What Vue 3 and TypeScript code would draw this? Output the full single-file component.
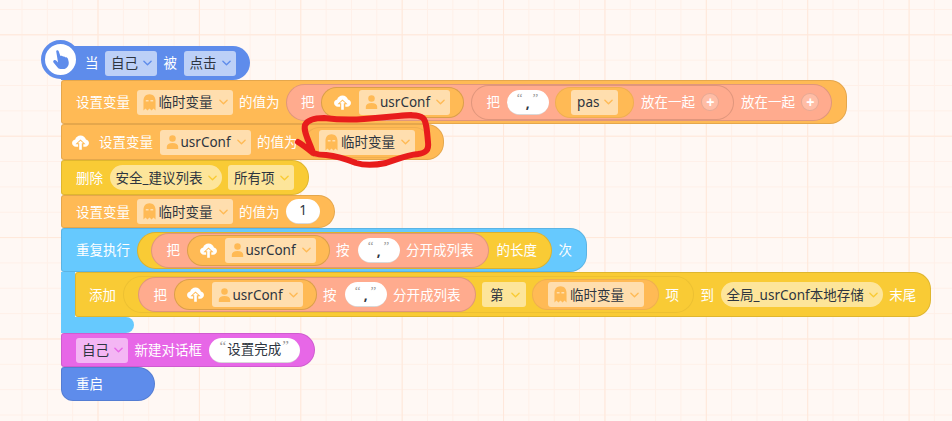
<template>
  <div class="page">
    <svg width="0" height="0" class="defs">
      <defs>
        <symbol id="ghost" viewBox="0 0 14 18">
          <path fill-rule="evenodd" d="M7 0C3 0 .5 3 .5 7v10.500l2.200-2 2.100 2 2.200-2 2.200 2 2.100-2 2.200 2V7C13.500 3 11 0 7 0ZM3 6.200h3v1.600H3Zm5 0h3v1.600H8Z" />
        </symbol>
        <symbol id="person" viewBox="0 0 14 16">
          <circle cx="7" cy="4" r="3.700" />
          <path d="M.5 16v-2.500C.5 10.500 3 9 7 9s6.500 1.500 6.500 4.500V16Z" />
        </symbol>
        <symbol id="cloud" viewBox="0 0 18 16">
          <path fill="#fff" d="M4.200 12.500C1.900 12.500 0 10.800 0 8.600c0-2 1.400-3.500 3.300-3.800C4 2.400 6.200.6 9 .6c2.900 0 5.200 1.900 5.800 4.300 1.900.3 3.200 1.800 3.200 3.700 0 2.200-1.800 3.900-4 3.900h-2V9.800h2.400L9 4.900 3.600 9.800H6.500v2.700Z" />
          <path fill="#fff" d="M7.600 15.800V8.900H6l3-2.800 3 2.800h-1.600v6.900Z" />
        </symbol>
        <symbol id="caret" viewBox="0 0 10 6">
          <path d="M1 1l4 4 4-4" fill="none" stroke="currentColor" stroke-width="1.500" stroke-linecap="round" stroke-linejoin="round" />
        </symbol>
      </defs>
    </svg>

    <div class="stack">
      <div class="row blue hat">
        <div class="hat-icon">
          <svg viewBox="0 0 16 19" width="16" height="19">
            <path fill="#5e8ceb" d="M3.200 1.200C3.400.2 5-.2 5.600 1L7.400 6C8.500 5.500 9.500 5.800 10 6.600 11 6.200 12 6.600 12.400 7.400 13.400 7.200 14.600 7.800 15 9L15.600 11.500C16.200 14.500 15 17 13 18.200L11.500 19H7.500C6 19 5 18 4.200 17L.5 12.500C-.1 11.600.2 10.600 1 10.200 1.800 9.800 2.800 10 3.400 10.800L5 12.400Z" />
          </svg>
        </div>
        <span>当</span>
        <div class="dd dd-blue"><span>自己</span><svg class="caret"><use href="#caret" /></svg></div>
        <span>被</span>
        <div class="dd dd-blue"><span>点击</span><svg class="caret"><use href="#caret" /></svg></div>
      </div>

      <div class="row orange h44">
        <span>设置变量</span>
        <div class="dd dd-orange"><svg class="ico ghost"><use href="#ghost" /></svg><span>临时变量</span><svg class="caret"><use href="#caret" /></svg></div>
        <span>的值为</span>
        <div class="pill salmon tall">
          <span>把</span>
          <div class="pill orange cloud-pill">
            <svg class="cloud"><use href="#cloud" /></svg>
            <div class="dd dd-orange"><svg class="ico person"><use href="#person" /></svg><span>usrConf</span><svg class="caret"><use href="#caret" /></svg></div>
          </div>
          <div class="pill salmon mid">
            <span>把</span>
            <div class="str comma"><i>“</i><b>,</b><i>”</i></div>
            <div class="pill orange var-pill">
              <div class="dd dd-orange"><span>pas</span><svg class="caret"><use href="#caret" /></svg></div>
            </div>
            <span>放在一起</span>
            <div class="plus">+</div>
          </div>
          <span>放在一起</span>
          <div class="plus">+</div>
        </div>
      </div>

      <div class="row orange h36 second">
        <svg class="cloud row-cloud"><use href="#cloud" /></svg>
        <span>设置变量</span>
        <div class="dd dd-orange"><svg class="ico person"><use href="#person" /></svg><span>usrConf</span><svg class="caret"><use href="#caret" /></svg></div>
        <span>的值为</span>
        <div class="pill orange var-pill short">
          <div class="dd dd-orange"><svg class="ico ghost"><use href="#ghost" /></svg><span>临时变量</span><svg class="caret"><use href="#caret" /></svg></div>
        </div>
      </div>

      <div class="row yellow h35">
        <span>删除</span>
        <div class="dd dd-yellow round"><span>安全_建议列表</span><svg class="caret"><use href="#caret" /></svg></div>
        <div class="dd dd-yellow"><span>所有项</span><svg class="caret"><use href="#caret" /></svg></div>
      </div>

      <div class="row orange h33">
        <span>设置变量</span>
        <div class="dd dd-orange"><svg class="ico ghost"><use href="#ghost" /></svg><span>临时变量</span><svg class="caret"><use href="#caret" /></svg></div>
        <span>的值为</span>
        <div class="str num">1</div>
      </div>

      <div class="loop">
        <div class="row sky h44">
          <span>重复执行</span>
          <div class="pill yellow tall head-pill">
            <div class="pill salmon mid">
              <span>把</span>
              <div class="pill orange cloud-pill">
                <svg class="cloud"><use href="#cloud" /></svg>
                <div class="dd dd-orange"><svg class="ico person"><use href="#person" /></svg><span>usrConf</span><svg class="caret"><use href="#caret" /></svg></div>
              </div>
              <span>按</span>
              <div class="str comma spaced"><i>“</i><b>,</b><i>”</i></div>
              <span>分开成列表</span>
            </div>
            <span class="after-pill">的长度</span>
          </div>
          <span>次</span>
        </div>

        <div class="loop-body">
          <div class="row yellow h45 inner">
            <span>添加</span>
            <div class="pill yellow tall faint">
              <div class="pill salmon mid">
                <span>把</span>
                <div class="pill orange cloud-pill">
                  <svg class="cloud"><use href="#cloud" /></svg>
                  <div class="dd dd-orange"><svg class="ico person"><use href="#person" /></svg><span>usrConf</span><svg class="caret"><use href="#caret" /></svg></div>
                </div>
                <span>按</span>
                <div class="str comma spaced"><i>“</i><b>,</b><i>”</i></div>
                <span>分开成列表</span>
              </div>
              <div class="dd dd-yellow narrow"><span>第</span><svg class="caret"><use href="#caret" /></svg></div>
              <div class="pill orange var-pill short">
                <div class="dd dd-orange"><svg class="ico ghost"><use href="#ghost" /></svg><span>临时变量</span><svg class="caret"><use href="#caret" /></svg></div>
              </div>
              <span>项</span>
            </div>
            <span>到</span>
            <div class="dd dd-yellow round"><span>全局_usrConf本地存储</span><svg class="caret"><use href="#caret" /></svg></div>
            <span>末尾</span>
          </div>
        </div>
        <div class="loop-foot"></div>
      </div>

      <div class="row purple h34">
        <div class="dd dd-purple"><span>自己</span><svg class="caret"><use href="#caret" /></svg></div>
        <span>新建对话框</span>
        <div class="str text"><i>“</i><b>设置完成</b><i>”</i></div>
      </div>

      <div class="row blue h34 restart">
        <span>重启</span>
      </div>
    </div>

    <svg class="scribble" width="952" height="421" viewBox="0 0 952 421">
      <path d="M298 142C303 145 308 149 313 153C310 143 303 132 305 125C308 119 316 118 324 118C340 120 352 120 364 119C376 118 386 117 398 116C408 115 418 114 423 118C427 122 427 133 428 142C429 150 426 153 418 154C406 155 396 160 386 163C376 165 366 166 356 163C346 159 336 156 326 155C320 155 316 154 313 153" fill="none" stroke="#e81c1c" stroke-width="6" stroke-linecap="round" stroke-linejoin="round" />
    </svg>
  </div>
</template>

<script setup lang="ts">
</script>

<style>
html,
body {
  margin: 0;
  background: #fff8f4;
}
</style>

<style scoped>
.page {
  position: relative;
  width: 952px;
  height: 421px;
  overflow: hidden;
  box-sizing: border-box;
  padding: 46px 0 0 61px;
  background-color: #fff8f4;
  background-image:
    linear-gradient(to right, #ffe8da 1px, transparent 1px),
    linear-gradient(to bottom, #ffe8da 1px, transparent 1px),
    linear-gradient(to right, #fff0e8 1px, transparent 1px),
    linear-gradient(to bottom, #fff0e8 1px, transparent 1px);
  background-size:
    101.4px 101.4px,
    101.4px 101.4px,
    25.35px 25.35px,
    25.35px 25.35px;
  background-position:
    97.5px 0,
    0 34.3px,
    21.5px 0,
    0 9px;
  font-family: "Noto Sans", "Noto Sans CJK SC", sans-serif;
  font-size: 13.5px;
  line-height: 1;
  color: #fff;
}

.defs {
  position: absolute;
}

.stack {
  display: flex;
  flex-direction: column;
  align-items: flex-start;
}

span {
  padding-top: 2px;
}

.row {
  display: inline-flex;
  align-items: center;
  gap: 6.5px;
  box-sizing: border-box;
  padding: 0 14px;
  white-space: nowrap;
  border: 1px solid rgba(0, 0, 0, 0.1);
  border-radius: 3px 17px 17px 3px;
}

.h33 { height: 33px; }
.h34 { height: 34px; }
.h35 { height: 35px; }
.h36 { height: 36px; }
.h44 { height: 44px; }
.h45 { height: 45px; }

.blue { background: #5e8ceb; }
.orange { background: #ffba55; }
.yellow { background: #f9cb35; }
.sky { background: #66c9fe; }
.purple { background: #e767e7; }
.salmon { background: #ffab8e; }

.hat {
  position: relative;
  height: 34px;
  padding-left: 24px;
  border-radius: 0 17px 17px 0;
  border: 0;
}

.hat-icon {
  position: absolute;
  left: -20px;
  top: -6px;
  box-sizing: border-box;
  width: 39px;
  height: 39px;
  display: flex;
  align-items: center;
  justify-content: center;
  border: 4.5px solid #5e8ceb;
  border-radius: 50%;
  background: #fff;
}

.second {
  padding: 0 13px 0 10px;
}

.second .short {
  padding-left: 14px;
}

.inner {
  padding: 0 14px 0 13px;
}

.row-cloud {
  margin-right: 3.5px;
}

.restart {
  width: 94px;
  border-radius: 3px 17px 17px 12px;
}

.dd {
  display: inline-flex;
  align-items: center;
  box-sizing: border-box;
  height: 25px;
  padding: 0 5px 0 6px;
  border-radius: 3px;
  color: #2d3540;
}

.dd-blue { background: #bcd0f7; color: #2d3540; }
.dd-orange { background: #ffdeae; }
.dd-yellow { background: #fde59a; }
.dd-purple { background: #f4b6f4; }
.round { border-radius: 13px; }

.narrow {
  padding: 0 6px 0 8px;
}

.narrow .caret {
  margin-left: 7px;
}

.caret {
  width: 9px;
  height: 6px;
  margin-left: 5px;
}

.ico ~ .caret {
  margin-left: 6px;
}

.dd-blue .caret { color: #5e8ceb; }
.dd-orange .caret { color: #ffba55; }
.dd-yellow .caret { color: #f9cb35; }
.dd-purple .caret { color: #e767e7; }

.ico {
  fill: #ffba55;
  flex: none;
  margin-right: 3px;
}

.ghost {
  width: 13px;
  height: 17px;
}

.person {
  width: 13px;
  height: 14px;
  margin-right: 2px;
}

.cloud {
  width: 17px;
  height: 15px;
  flex: none;
}

.pill {
  display: inline-flex;
  align-items: center;
  gap: 6.5px;
  box-sizing: border-box;
  border: 1px solid rgba(0, 0, 0, 0.12);
  border-radius: 19px;
}

.tall {
  height: 37px;
  padding: 0 12px 0 14px;
}

.yellow.tall {
  padding: 0 14px;
}

.yellow.head-pill {
  padding-left: 13px;
}

.faint {
  border-color: rgba(0, 0, 0, 0.05);
}

.mid {
  height: 35px;
  padding: 0 14px 0 15px;
}

.cloud-pill {
  height: 31px;
  gap: 8px;
  padding: 0 13px 0 12px;
  border-color: rgba(0, 0, 0, 0.14);
}

.var-pill {
  height: 31px;
  padding: 0 15px;
  border-color: rgba(0, 0, 0, 0.06);
}

.short {
  padding: 0 14px 0 15px;
}

.after-pill {
  margin-left: 1.5px;
}

.str {
  display: inline-flex;
  align-items: center;
  justify-content: center;
  box-sizing: border-box;
  height: 25px;
  border-radius: 13px;
  background: #fff;
  color: #2d3540;
  border-bottom: 1px solid rgba(0, 0, 0, 0.15);
}

.str i {
  font-family: "Liberation Serif", serif;
  font-style: normal;
  font-size: 15px;
  color: #9a9a9a;
  position: relative;
  top: -3px;
}

.str b {
  font-weight: 400;
}

.comma {
  width: 42px;
  gap: 3px;
}

.comma i {
  font-size: 13px;
  top: -4px;
}

.comma b {
  font-weight: 700;
  position: relative;
  top: 2px;
}

.spaced {
  margin-left: 1.5px;
}

.num {
  width: 34px;
}

.text {
  padding: 0 11px;
  gap: 1px;
}

.plus {
  display: flex;
  align-items: center;
  justify-content: center;
  box-sizing: border-box;
  width: 18px;
  height: 18px;
  border-radius: 50%;
  border: 1px solid rgba(0, 0, 0, 0.1);
  background: #ffbda6;
  font-family: "Liberation Sans", sans-serif;
  font-weight: 700;
  font-size: 14px;
}

.loop {
  display: flex;
  flex-direction: column;
  align-items: flex-start;
}

.loop-body {
  box-sizing: border-box;
  border-left: 14px solid #66c9fe;
}

.loop-foot {
  width: 73px;
  height: 16px;
  background: #66c9fe;
  border-radius: 0 8px 8px 0;
}

.scribble {
  position: absolute;
  left: 0;
  top: 0;
  pointer-events: none;
}
</style>
